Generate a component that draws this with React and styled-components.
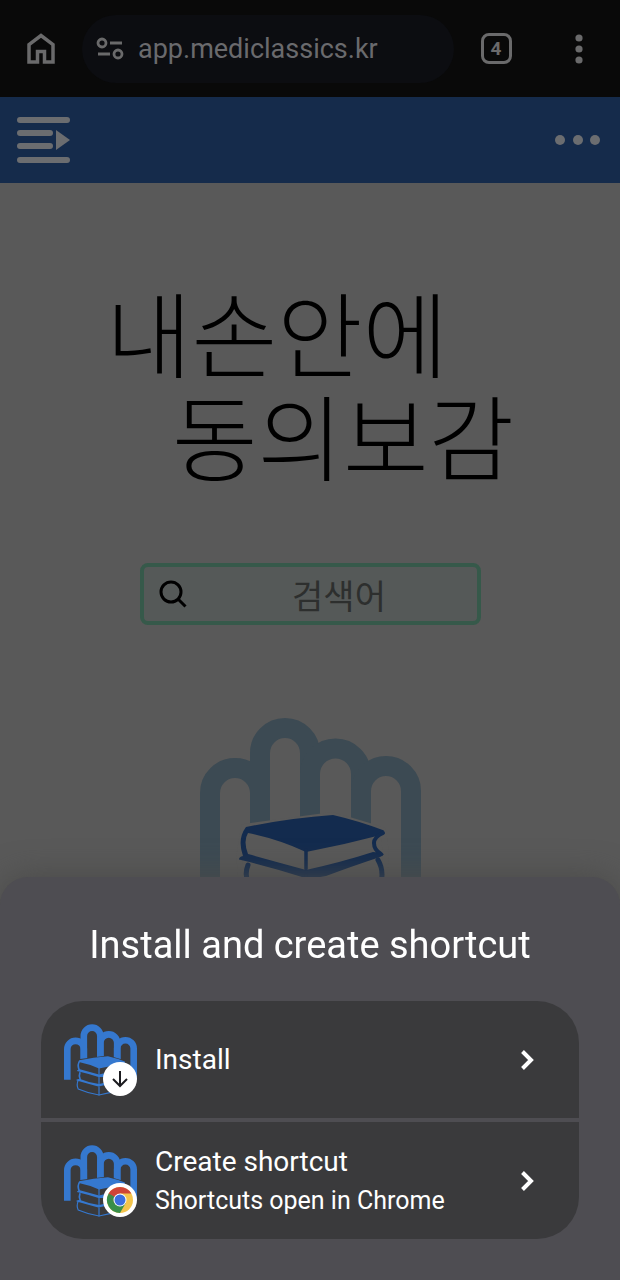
import styled, { createGlobalStyle } from "styled-components";

const GlobalStyle = createGlobalStyle`
  * {
    box-sizing: border-box;
  }
  body {
    margin: 0;
    background-color: #595959;
    font-family: Roboto, "Noto Sans CJK KR", sans-serif;
  }
  h1, h2, p {
    margin: 0;
  }
  button {
    padding: 0;
    border: none;
    background: none;
    color: inherit;
    font: inherit;
  }
`;

const Page = styled.div`
  min-height: 100vh;
  overflow: hidden;
`;

const Toolbar = styled.div`
  height: 97px;
  padding-left: 24px;
  display: flex;
  align-items: center;
  background-color: #090909;
  color: #6a6a6b;
`;

const ToolButton = styled.button`
  width: ${({ $width }) => $width}px;
  display: flex;
  justify-content: center;
  align-items: center;
`;

const Address = styled.label`
  height: 68px;
  margin-left: 24px;
  padding: 0 14px;
  display: flex;
  flex: 1;
  min-width: 0;
  align-items: center;
  gap: 14px;
  border-radius: 34px;
  background-color: #0c0d11;

  svg {
    flex-shrink: 0;
  }
`;

const AddressInput = styled.input`
  width: 100%;
  min-width: 0;
  padding: 0;
  border: none;
  outline: none;
  background: none;
  color: #6a6a6d;
  font: 27px Roboto, sans-serif;
`;

const TabCount = styled.span`
  width: 31px;
  height: 31px;
  display: flex;
  justify-content: center;
  align-items: center;
  border: 3px solid #6a6a6b;
  border-radius: 8px;
  font-size: 19px;
  font-weight: 700;
`;

const Header = styled.header`
  height: 86px;
  padding: 0 19px 0 16px;
  display: flex;
  justify-content: space-between;
  align-items: center;
  background-color: #152b4b;
  color: #6b6d70;
`;

const Main = styled.main`
  padding-top: 96px;
  display: flex;
  flex-direction: column;
  align-items: center;
`;

const Title = styled.h1`
  color: #000;
  font-family: "Noto Sans CJK KR", sans-serif;
  font-size: 93px;
  font-weight: 300;
  line-height: 103px;

  span {
    display: block;
  }
  span:last-child {
    padding-left: 66px;
  }
`;

const Search = styled.label`
  width: 55%;
  height: 62px;
  margin: 78px 0 92px;
  padding: 0 14px;
  display: flex;
  align-items: center;
  border: 4px solid #36594a;
  border-radius: 8px;
  background-color: #555958;

  svg {
    flex-shrink: 0;
  }
`;

const SearchInput = styled.input`
  width: 100%;
  min-width: 0;
  padding: 0 0 0 28px;
  border: none;
  outline: none;
  background: none;
  font: 34px "Noto Sans CJK KR", sans-serif;
  text-align: center;

  &::placeholder {
    color: #2d2f2e;
    opacity: 1;
  }
`;

const Sheet = styled.section`
  position: fixed;
  right: 0;
  bottom: 0;
  left: 0;
  padding: 44px 41px 41px;
  border-radius: 28px 28px 0 0;
  background-color: #4e4d52;
  box-shadow: 0 0 32px #4a4a48;
  color: #fff;
`;

const SheetTitle = styled.h2`
  margin-bottom: 32px;
  font-size: 38px;
  font-weight: 400;
  line-height: 48px;
  text-align: center;
`;

const Options = styled.div`
  display: flex;
  flex-direction: column;
  gap: 4px;
  overflow: hidden;
  border-radius: 42px;
`;

const Option = styled.button`
  height: 117px;
  padding: 0 40px 0 23px;
  display: flex;
  align-items: center;
  gap: 18px;
  background-color: #3a3a3c;
  text-align: left;
`;

const OptionIcon = styled.span`
  position: relative;
  display: flex;
`;

const Badge = styled.span`
  position: absolute;
  right: 0;
  bottom: 0;
  width: 34px;
  height: 34px;
  display: flex;
  border-radius: 50%;
  background-color: #fff;
`;

const OptionText = styled.span`
  flex: 1;
  display: flex;
  flex-direction: column;
  font-size: 28px;
  line-height: 40px;

  small {
    font-size: 25px;
    line-height: 38px;
  }
`;

// four fingers with a stack of three books in front
const HandLogo = ({ width, hand, book, paper }) => (
  <svg width={width} viewBox="0 0 221 218" fill="none" aria-hidden="true">
    <g stroke={hand} strokeWidth="20">
      <path d="M10 169V76a25 25 0 0 1 50 0v34" />
      <path d="M60 110V36a25 25 0 0 1 50 0v70" />
      <path d="M110 106V57a25.500 25.500 0 0 1 51 0v54" />
      <path d="M161 111V74a25 25 0 0 1 50 0v95" />
    </g>
    <path
      d="M44 110 133 98l50 15 3 24-3 40 2 22-79 17-62-18-5-25 2-20-2-12z"
      fill={paper}
      stroke={paper}
      strokeWidth="6"
      strokeLinejoin="round"
    />
    <g fill={book}>
      <path d="M46 110q44-9 87-12 26 6 51 15.500-2 2-1 4-38 10-77 17.500-28-13-58-19-5 8 0 21 29 8 58 16 36-8 67-18 5 0 11 2-1 2-4 3-30 10-54 19-12 3-24 1-31-10-63-17.500 0-3 4-3.500-6-17 3-29z" />
      <path d="M38 168q6-3 13-1 27 11 55 15 36-8 75-17 3 1 3 4-36 10-72 19-8 2-14 0-27-8-60-17z" />
    </g>
    <g stroke={book} strokeWidth="3.500" strokeLinecap="round">
      <path d="M106 133v19M106 158v26M106 190v25" />
      <path d="M183 116q-9 4-9 10 0 7 7 11" strokeWidth="4" />
      <path d="M48 148q-4 10 1 20M178 143q6 10 3 23" strokeWidth="5" />
      <path d="M43 170q-6 13 0 27 30 13 63 18 38-8 76-17M181 169q-6 14 1 29" />
    </g>
  </svg>
);

const ChromeLogo = () => (
  <svg width="34" height="34" viewBox="0 0 34 34" aria-hidden="true">
    <circle cx="17" cy="17" r="13" fill="#f3c44c" />
    <path d="M5.700 10.500A13 13 0 0 0 17 30l5.600-9.700L17 17z" fill="#388e4a" />
    <path d="M5.700 10.500a13 13 0 0 1 22.600 0H17v6.500l-5.600 3.200z" fill="#cf4437" />
    <path d="M5.700 10.500 11.400 20.200 17 17z" fill="#388e4a" />
    <circle cx="17" cy="17" r="6.500" fill="#fff" />
    <circle cx="17" cy="17" r="5.500" fill="#3b6fe0" />
  </svg>
);

const Chevron = () => (
  <svg width="24" height="24" viewBox="0 0 24 24" fill="none" stroke="#fff" strokeWidth="4" aria-hidden="true">
    <path d="m7.500 3.500 8.500 8.500-8.500 8.500" />
  </svg>
);

export default function App() {
  return (
    <Page>
      <GlobalStyle />
      <Toolbar>
        <ToolButton $width={34} aria-label="Home">
          <svg width="34" height="34" viewBox="0 0 34 34" fill="none" stroke="currentColor" strokeWidth="3.500">
            <path d="M5 30V12.500L17 3.500l12 9V30h-8.500V19.500h-7V30z" />
          </svg>
        </ToolButton>
        <Address>
          <svg width="28" height="24" viewBox="0 0 28 24" fill="none" stroke="currentColor" strokeWidth="2.800">
            <circle cx="6" cy="6" r="4" />
            <circle cx="22" cy="17" r="4" />
            <path d="M14 6h12M2 17h12" />
          </svg>
          <AddressInput aria-label="Address" defaultValue="app.mediclassics.kr" />
        </Address>
        <ToolButton $width={84} aria-label="Tabs">
          <TabCount>4</TabCount>
        </ToolButton>
        <ToolButton $width={82} aria-label="Menu">
          <svg width="8" height="30" viewBox="0 0 8 30" fill="currentColor">
            <circle cx="4" cy="4" r="3.600" />
            <circle cx="4" cy="15" r="3.600" />
            <circle cx="4" cy="26" r="3.600" />
          </svg>
        </ToolButton>
      </Toolbar>

      <Header>
        <ToolButton $width={54} aria-label="목차">
          <svg width="54" height="46" viewBox="0 0 54 46" fill="currentColor">
            <rect x="1" width="53" height="6" rx="3" />
            <rect x="1" y="13" width="36" height="6" rx="3" />
            <rect x="1" y="26" width="36" height="6" rx="3" />
            <rect x="1" y="40" width="53" height="6" rx="3" />
            <path d="M40 13v20l14-10z" />
          </svg>
        </ToolButton>
        <ToolButton $width={46} aria-label="더보기">
          <svg width="46" height="10" viewBox="0 0 46 10" fill="currentColor">
            <circle cx="5" cy="5" r="5" />
            <circle cx="23" cy="5" r="5" />
            <circle cx="40" cy="5" r="5" />
          </svg>
        </ToolButton>
      </Header>

      <Main>
        <Title>
          <span>내손안에</span>
          <span>동의보감</span>
        </Title>
        <Search>
          <svg width="30" height="30" viewBox="0 0 30 30" fill="none" stroke="#000" strokeWidth="3">
            <circle cx="13" cy="13" r="10" />
            <path d="m20 20 7.500 7.500" />
          </svg>
          <SearchInput aria-label="검색어" placeholder="검색어" />
        </Search>
        <HandLogo width={221} hand="#3c4a53" book="#132b4e" paper="#595959" />
      </Main>

      <Sheet>
        <SheetTitle>Install and create shortcut</SheetTitle>
        <Options>
          <Option>
            <OptionIcon>
              <HandLogo width={73} hand="#3578cf" book="#3578cf" paper="#3a3a3c" />
              <Badge>
                <svg width="34" height="34" viewBox="0 0 34 34" fill="none" stroke="#1b1b1f" strokeWidth="2">
                  <path d="M17 9v15m-7-7 7 7 7-7" />
                </svg>
              </Badge>
            </OptionIcon>
            <OptionText>Install</OptionText>
            <Chevron />
          </Option>
          <Option>
            <OptionIcon>
              <HandLogo width={73} hand="#3578cf" book="#3578cf" paper="#3a3a3c" />
              <Badge>
                <ChromeLogo />
              </Badge>
            </OptionIcon>
            <OptionText>
              Create shortcut
              <small>Shortcuts open in Chrome</small>
            </OptionText>
            <Chevron />
          </Option>
        </Options>
      </Sheet>
    </Page>
  );
}
